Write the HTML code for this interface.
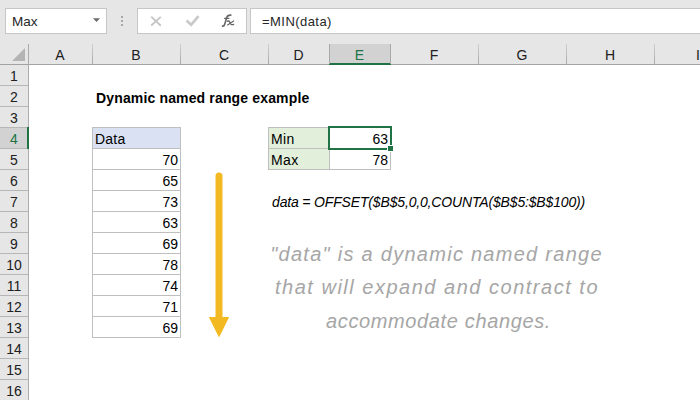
<!DOCTYPE html>
<html><head><meta charset="utf-8">
<style>
html,body{margin:0;padding:0;width:700px;height:400px;overflow:hidden;background:#fff;position:relative;font-family:"Liberation Sans",sans-serif;}
div,span,svg{position:absolute;box-sizing:border-box;}
.t{white-space:nowrap;height:20px;line-height:20px;}
.box{background:#fff;border:1px solid #c6c6c6;}
.ch{top:45px;height:20px;line-height:20px;text-align:center;font-size:14px;color:#202020;}
.rh{left:0;width:28px;height:20px;line-height:20px;text-align:center;font-size:14px;color:#202020;}
.c{height:20px;line-height:22px;font-size:14px;color:#000;white-space:nowrap;}
.hs{top:44px;width:1px;height:20px;background:linear-gradient(#cfcfcf,#a9a9a9);}
</style></head><body>

<div style="left:0;top:0;width:700px;height:44px;background:#e6e6e6;"></div>
<div class="box" style="left:5px;top:8px;width:102px;height:26px;"></div>
<div class="t" style="left:12px;top:11.5px;font-size:13.5px;color:#262626;">Max</div>
<svg style="left:92px;top:17px" width="9" height="6"><polygon points="1,1.2 8,1.2 4.5,5" fill="#6b6b6b"/></svg>
<div style="left:121px;top:16px;width:2px;height:2px;background:#a8a8a8"></div>
<div style="left:121px;top:20px;width:2px;height:2px;background:#a8a8a8"></div>
<div style="left:121px;top:24px;width:2px;height:2px;background:#a8a8a8"></div>
<div class="box" style="left:137px;top:8px;width:110px;height:26px;"></div>
<svg style="left:148px;top:14px" width="16" height="14"><path d="M3.2,2.6 L12.8,11.8 M12.8,2.9 L3.2,11.5" stroke="#c6c6c6" stroke-width="1.9"/></svg>
<svg style="left:184px;top:15px" width="18" height="14"><path d="M2.6,5.6 L7.1,9.9 L14.5,1.1" stroke="#c9c9c9" stroke-width="2.7" fill="none"/></svg>
<svg style="left:216px;top:10px" width="24" height="22"><g fill="none" stroke="#666" stroke-linecap="round"><path d="M6.5,16.1 Q8,16.4 8.7,14.2 L10.7,7.4 Q11.6,4.9 14.8,5.1" stroke-width="1.6"/><path d="M8.6,8.4 L12.9,8.4" stroke-width="1.2"/><path d="M11.4,11.2 Q12.9,10.4 13.7,12 L14.7,14 Q15.5,15.3 17.6,14.4" stroke-width="1.4"/><path d="M17.6,10.9 L11.6,14.9" stroke-width="1.2"/></g></svg>
<div class="box" style="left:250px;top:8px;width:460px;height:26px;"></div>
<div class="t" style="left:262px;top:11.5px;font-size:13px;letter-spacing:0.45px;color:#262626;">=MIN(data)</div>
<div style="left:0;top:44px;width:700px;height:21px;background:#e6e6e6;border-bottom:1px solid #a3a3a3;"></div>
<div style="left:330px;top:44px;width:60px;height:19px;background:#d2d2d2;"></div>
<div style="left:329px;top:63px;width:62px;height:2px;background:#217346;"></div>
<div class="hs" style="left:92px;"></div>
<div class="hs" style="left:180px;"></div>
<div class="hs" style="left:268px;"></div>
<div class="hs" style="left:329px;background:#a9a9a9"></div>
<div class="hs" style="left:390px;background:#a9a9a9"></div>
<div class="hs" style="left:478px;"></div>
<div class="hs" style="left:566px;"></div>
<div class="hs" style="left:654px;"></div>
<div class="ch" style="left:28px;width:64px;">A</div>
<div class="ch" style="left:92px;width:88px;">B</div>
<div class="ch" style="left:180px;width:88px;">C</div>
<div class="ch" style="left:268px;width:61px;">D</div>
<div class="ch" style="left:329px;width:61px;color:#217346;">E</div>
<div class="ch" style="left:390px;width:88px;">F</div>
<div class="ch" style="left:478px;width:88px;">G</div>
<div class="ch" style="left:566px;width:88px;">H</div>
<div class="ch" style="left:654px;width:88px;">I</div>
<svg style="left:12px;top:48px" width="14" height="14"><polygon points="13,0 13,13 0,13" fill="#b4b4b4"/></svg>
<div style="left:0;top:65px;width:28px;height:335px;background:#e6e6e6;"></div>
<div style="left:28px;top:44px;width:1px;height:356px;background:#ababab"></div>
<div style="left:0;top:85px;width:28px;height:1px;background:#b6b6b6"></div>
<div class="rh" style="top:66px;">1</div>
<div style="left:0;top:106px;width:28px;height:1px;background:#b6b6b6"></div>
<div class="rh" style="top:87px;">2</div>
<div style="left:0;top:127px;width:28px;height:1px;background:#b6b6b6"></div>
<div class="rh" style="top:108px;">3</div>
<div style="left:0;top:128px;width:27px;height:20px;background:#d2d2d2;"></div>
<div style="left:27px;top:127px;width:2px;height:22px;background:#217346;z-index:2"></div>
<div style="left:0;top:148px;width:28px;height:1px;background:#b6b6b6"></div>
<div class="rh" style="top:129px;color:#217346;">4</div>
<div style="left:0;top:169px;width:28px;height:1px;background:#b6b6b6"></div>
<div class="rh" style="top:150px;">5</div>
<div style="left:0;top:190px;width:28px;height:1px;background:#b6b6b6"></div>
<div class="rh" style="top:171px;">6</div>
<div style="left:0;top:211px;width:28px;height:1px;background:#b6b6b6"></div>
<div class="rh" style="top:192px;">7</div>
<div style="left:0;top:232px;width:28px;height:1px;background:#b6b6b6"></div>
<div class="rh" style="top:213px;">8</div>
<div style="left:0;top:253px;width:28px;height:1px;background:#b6b6b6"></div>
<div class="rh" style="top:234px;">9</div>
<div style="left:0;top:274px;width:28px;height:1px;background:#b6b6b6"></div>
<div class="rh" style="top:255px;">10</div>
<div style="left:0;top:295px;width:28px;height:1px;background:#b6b6b6"></div>
<div class="rh" style="top:276px;">11</div>
<div style="left:0;top:316px;width:28px;height:1px;background:#b6b6b6"></div>
<div class="rh" style="top:297px;">12</div>
<div style="left:0;top:337px;width:28px;height:1px;background:#b6b6b6"></div>
<div class="rh" style="top:318px;">13</div>
<div style="left:0;top:358px;width:28px;height:1px;background:#b6b6b6"></div>
<div class="rh" style="top:339px;">14</div>
<div style="left:0;top:379px;width:28px;height:1px;background:#b6b6b6"></div>
<div class="rh" style="top:360px;">15</div>
<div style="left:0;top:400px;width:28px;height:1px;background:#b6b6b6"></div>
<div class="rh" style="top:381px;">16</div>
<div class="t" style="left:96px;top:87.5px;font-size:14px;font-weight:bold;letter-spacing:0.15px;color:#000;">Dynamic named range example</div>
<div style="left:92px;top:127px;width:89px;height:22px;background:#d9e1f2;border:1px solid #bfbfbf;"></div>
<div class="c" style="left:95px;top:128px;letter-spacing:0.2px;">Data</div>
<div style="left:92px;top:148px;width:89px;height:22px;border:1px solid #bfbfbf;"></div>
<div class="c" style="left:92px;top:149px;width:86px;text-align:right;">70</div>
<div style="left:92px;top:169px;width:89px;height:22px;border:1px solid #bfbfbf;"></div>
<div class="c" style="left:92px;top:170px;width:86px;text-align:right;">65</div>
<div style="left:92px;top:190px;width:89px;height:22px;border:1px solid #bfbfbf;"></div>
<div class="c" style="left:92px;top:191px;width:86px;text-align:right;">73</div>
<div style="left:92px;top:211px;width:89px;height:22px;border:1px solid #bfbfbf;"></div>
<div class="c" style="left:92px;top:212px;width:86px;text-align:right;">63</div>
<div style="left:92px;top:232px;width:89px;height:22px;border:1px solid #bfbfbf;"></div>
<div class="c" style="left:92px;top:233px;width:86px;text-align:right;">69</div>
<div style="left:92px;top:253px;width:89px;height:22px;border:1px solid #bfbfbf;"></div>
<div class="c" style="left:92px;top:254px;width:86px;text-align:right;">78</div>
<div style="left:92px;top:274px;width:89px;height:22px;border:1px solid #bfbfbf;"></div>
<div class="c" style="left:92px;top:275px;width:86px;text-align:right;">74</div>
<div style="left:92px;top:295px;width:89px;height:22px;border:1px solid #bfbfbf;"></div>
<div class="c" style="left:92px;top:296px;width:86px;text-align:right;">71</div>
<div style="left:92px;top:316px;width:89px;height:22px;border:1px solid #bfbfbf;"></div>
<div class="c" style="left:92px;top:317px;width:86px;text-align:right;">69</div>
<div style="left:268px;top:127px;width:62px;height:22px;background:#e2efda;border:1px solid #bfbfbf;"></div>
<div style="left:268px;top:148px;width:62px;height:22px;background:#e2efda;border:1px solid #bfbfbf;"></div>
<div style="left:329px;top:148px;width:62px;height:22px;border:1px solid #bfbfbf;"></div>
<div class="c" style="left:271px;top:128px;letter-spacing:0.4px;">Min</div>
<div class="c" style="left:271px;top:149px;letter-spacing:0.4px;">Max</div>
<div class="c" style="left:329px;top:128px;width:59px;text-align:right;">63</div>
<div class="c" style="left:329px;top:149px;width:59px;text-align:right;">78</div>
<div style="left:328px;top:126px;width:64px;height:24px;border:2px solid #217346;"></div>
<div style="left:387px;top:145px;width:7px;height:7px;background:#fff;"></div>
<div style="left:388px;top:146px;width:5px;height:5px;background:#217346;"></div>
<div class="c" style="left:272px;top:191px;font-style:italic;letter-spacing:-0.16px;">data = OFFSET($B$5,0,0,COUNTA($B$5:$B$100))</div>
<svg style="left:205px;top:168px" width="30" height="175"><line x1="14" y1="8" x2="14" y2="152" stroke="#f2b922" stroke-width="7" stroke-linecap="round"/><polygon points="3.8,149 24.2,149 14,169.5" fill="#f2b922"/></svg>
<div style="left:136.5px;top:237.5px;width:600px;text-align:center;font-size:20px;line-height:33px;color:#a6a6a6;font-style:italic;white-space:nowrap;letter-spacing:1.27px;">"data" is a dynamic named range</div>
<div style="left:137.0px;top:271px;width:600px;text-align:center;font-size:20px;line-height:33px;color:#a6a6a6;font-style:italic;white-space:nowrap;letter-spacing:1.51px;">that will expand and contract to</div>
<div style="left:138.5px;top:304.5px;width:600px;text-align:center;font-size:20px;line-height:33px;color:#a6a6a6;font-style:italic;white-space:nowrap;letter-spacing:0.63px;">accommodate changes.</div>
</body></html>
